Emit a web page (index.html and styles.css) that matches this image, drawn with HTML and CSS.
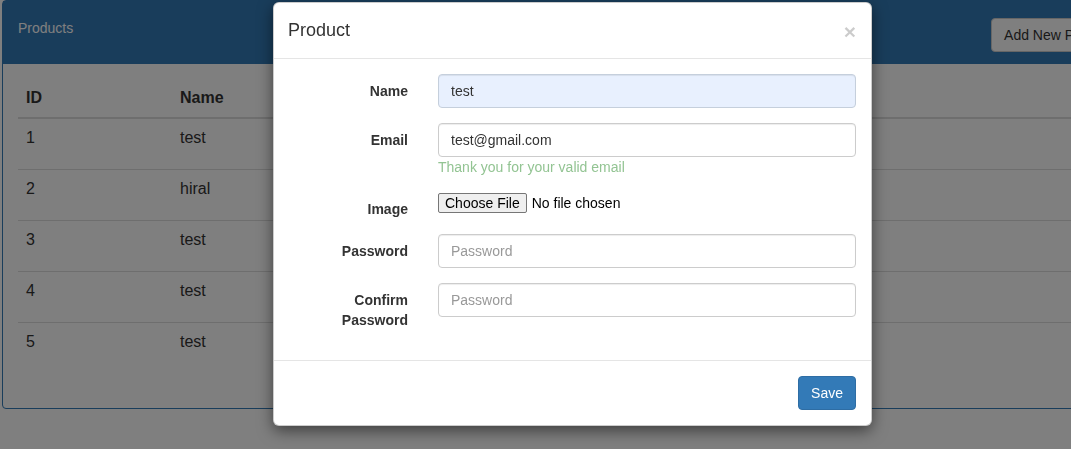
FILE: index.html
```html
<!DOCTYPE html>
<html lang="en">
<head>
<meta charset="utf-8">
<title>Products</title>
<link rel="stylesheet" href="styles.css">
</head>
<body>
<div class="panel">
  <div class="panel-heading">
    <span class="panel-title">Products</span>
    <button class="btn btn-default">Add New Product</button>
  </div>
  <div class="panel-body">
    <table class="table">
      <thead>
        <tr><th class="col-id">ID</th><th>Name</th></tr>
      </thead>
      <tbody>
        <tr><td>1</td><td>test</td></tr>
        <tr><td>2</td><td>hiral</td></tr>
        <tr><td>3</td><td>test</td></tr>
        <tr><td>4</td><td>test</td></tr>
        <tr><td>5</td><td>test</td></tr>
      </tbody>
    </table>
  </div>
</div>

<div class="backdrop"></div>

<div class="modal">
  <div class="modal-header">
    <h4 class="modal-title">Product</h4>
    <span class="close">&times;</span>
  </div>
  <div class="modal-body">
    <div class="form-group">
      <label class="control-label">Name</label>
      <div class="control"><div class="form-control autofill">test</div></div>
    </div>
    <div class="form-group">
      <label class="control-label">Email</label>
      <div class="control">
        <div class="form-control">test@gmail.com</div>
        <span class="help-text">Thank you for your valid email</span>
      </div>
    </div>
    <div class="form-group">
      <label class="control-label">Image</label>
      <div class="control file-control">
        <span class="file-btn">Choose File</span><span class="file-name">No file chosen</span>
      </div>
    </div>
    <div class="form-group">
      <label class="control-label">Password</label>
      <div class="control"><div class="form-control placeholder">Password</div></div>
    </div>
    <div class="form-group">
      <label class="control-label">Confirm<br>Password</label>
      <div class="control"><div class="form-control placeholder">Password</div></div>
    </div>
  </div>
  <div class="modal-footer">
    <button class="btn btn-primary">Save</button>
  </div>
</div>
</body>
</html>
```
FILE: styles.css
```css
html {
  overflow: hidden;
}
body {
  margin: 0;
  padding: 0 0 0 2px;
  font-family: "Liberation Sans", Arial, sans-serif;
  font-size: 14px;
  line-height: 20px;
  color: #333;
  background: #fff;
  width: 1200px;
}

.panel {
  width: 1138px;
  border: 1px solid #337ab7;
  border-radius: 4px;
  background: #fff;
}
.panel-heading {
  display: flex;
  justify-content: space-between;
  align-items: flex-start;
  background: #337ab7;
  color: #fff;
  padding: 17px 15px 12px 15px;
}
.panel-title {
  display: block;
}
.panel-body {
  padding: 14px 15px 15px;
}

.btn {
  font-family: "Liberation Sans", Arial, sans-serif;
  font-size: 14px;
  line-height: 20px;
  padding: 6px 12px;
  border-radius: 4px;
  border: 1px solid transparent;
  cursor: pointer;
}
.btn-default {
  background: #fff;
  border-color: #ccc;
  color: #333;
}
.btn-primary {
  background: #337ab7;
  border-color: #2e6da4;
  color: #fff;
}

.table {
  width: 100%;
  border-collapse: collapse;
  margin-bottom: 20px;
  font-size: 16px;
  line-height: 23px;
}
.table th {
  text-align: left;
  font-weight: bold;
  padding: 8px;
  border-bottom: 2px solid #ddd;
}
.table td {
  padding: 7px 8px 20px;
  vertical-align: top;
  border-top: 1px solid #ddd;
}
.table tbody tr:first-child td {
  border-top: 0;
}
.col-id {
  width: 138px;
}

.backdrop {
  position: fixed;
  inset: 0;
  background: rgba(0, 0, 0, 0.5);
}

.modal {
  position: absolute;
  left: 273px;
  top: 2px;
  width: 599px;
  box-sizing: border-box;
  background: #fff;
  border: 1px solid rgba(0, 0, 0, 0.2);
  border-radius: 6px;
  box-shadow: 0 5px 15px rgba(0, 0, 0, 0.5);
}
.modal-header {
  display: flex;
  justify-content: space-between;
  align-items: flex-start;
  padding: 15px 15px 15px 14px;
  border-bottom: 1px solid #e5e5e5;
}
.modal-title {
  margin: 0;
  font-size: 18px;
  font-weight: normal;
  line-height: 25px;
  color: #333;
}
.close {
  font-size: 21px;
  font-weight: bold;
  line-height: 1;
  color: #000;
  opacity: 0.2;
  margin-top: 3px;
  margin-right: 0;
}
.modal-body {
  padding: 15px 0;
}
.form-group {
  display: grid;
  grid-template-columns: 149px 1fr;
  margin-bottom: 15px;
}
.control-label {
  text-align: right;
  font-weight: bold;
  padding: 7px 15px 0;
}
.control {
  padding: 0 15px;
}
.form-control {
  height: 34px;
  box-sizing: border-box;
  padding: 6px 12px;
  border: 1px solid #ccc;
  border-radius: 4px;
  background: #fff;
  color: #333;
  box-shadow: inset 0 1px 1px rgba(0, 0, 0, 0.075);
}
.autofill {
  background: #e8f0fe;
  border-color: #c5cfdc;
}
.placeholder {
  color: #999;
}
.help-text {
  display: block;
  margin-top: 0;
  color: #93c493;
}
.file-control {
  display: flex;
  align-items: flex-start;
  padding-top: 1px;
  color: #000;
}
.file-btn {
  display: inline-block;
  background: #efefef;
  border: 1px solid #767676;
  border-radius: 2px;
  padding: 0 6px;
  line-height: 18px;
  color: #000;
}
.file-name {
  margin-left: 5px;
  line-height: 20px;
}
.modal-footer {
  padding: 15px;
  text-align: right;
  border-top: 1px solid #e5e5e5;
}
```
